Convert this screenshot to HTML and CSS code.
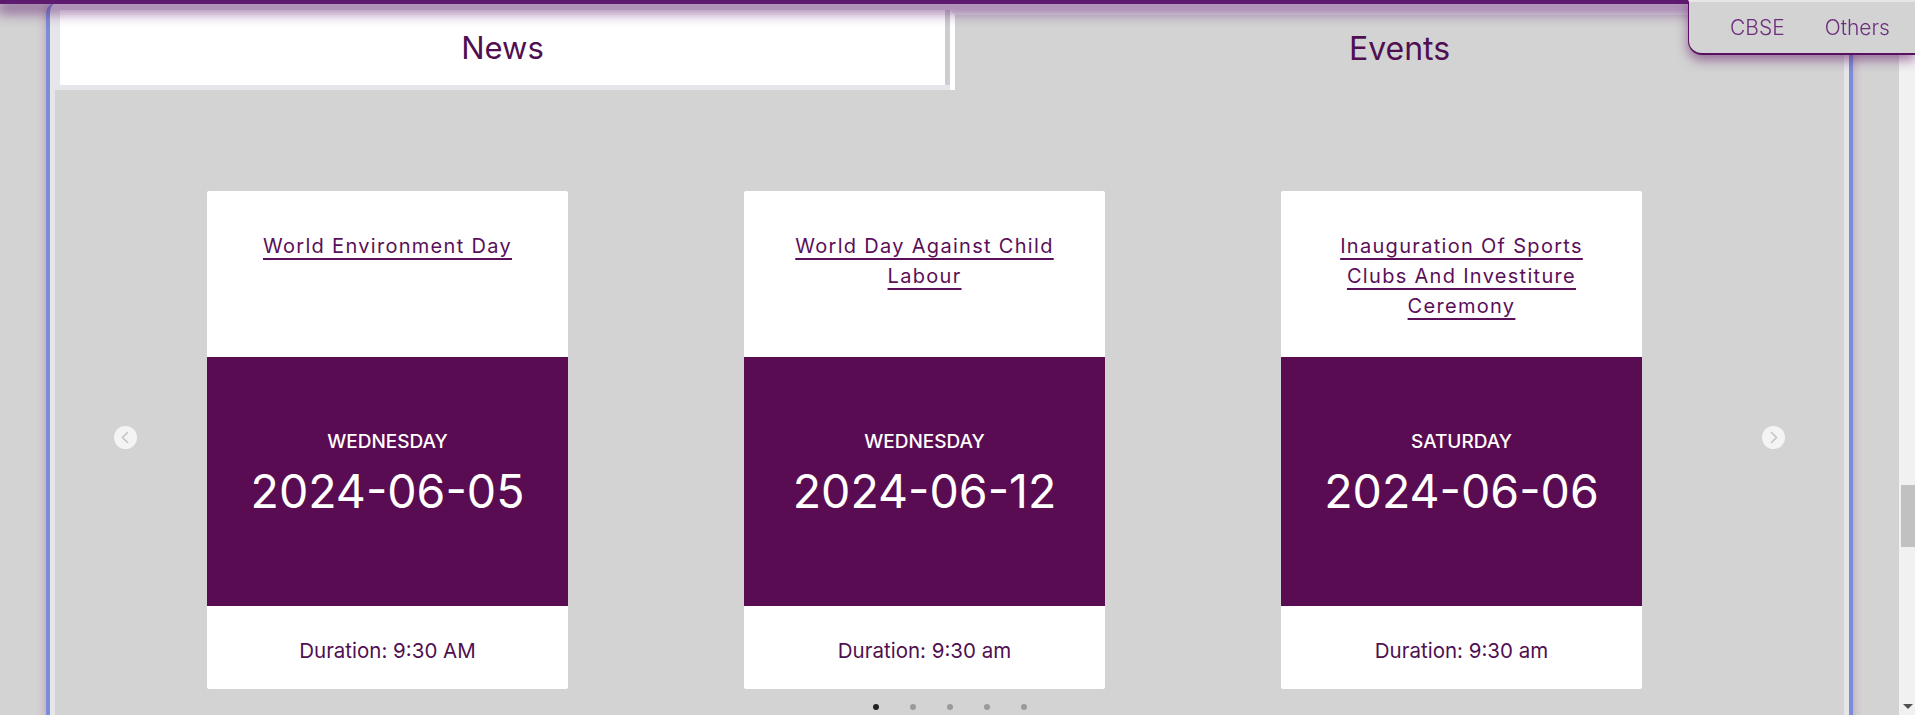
FILE: index.html
```html
<!DOCTYPE html>
<html lang="en">
<head>
<meta charset="utf-8">
<title>News and Events</title>
<link rel="stylesheet" href="styles.css">
</head>
<body>
<div class="topbar"></div>
<nav class="dropdown">
  <a class="dropdown-link">CBSE</a>
  <a class="dropdown-link">Others</a>
</nav>
<div class="page">
  <section class="frame">
    <div class="tabs">
      <div class="tab tab-news">News</div>
      <div class="tab tab-events">Events</div>
    </div>
    <div class="panel">
      <div class="carousel">
        <button class="nav nav-prev" aria-label="Previous">
          <svg width="23" height="23" viewBox="0 0 23 23"><polyline points="13.5,6.5 8.5,11.5 13.5,16.5" fill="none" stroke="#c4c4c4" stroke-width="1.6" stroke-linecap="round" stroke-linejoin="round"/></svg>
        </button>
        <div class="cards">
          <article class="card">
            <div class="card-title"><a class="title-link">World Environment Day</a></div>
            <div class="card-date">
              <div class="day">WEDNESDAY</div>
              <div class="date">2024-06-05</div>
            </div>
            <div class="card-foot">Duration: 9:30 AM</div>
          </article>
          <article class="card">
            <div class="card-title"><a class="title-link">World Day Against Child Labour</a></div>
            <div class="card-date">
              <div class="day">WEDNESDAY</div>
              <div class="date">2024-06-12</div>
            </div>
            <div class="card-foot">Duration: 9:30 am</div>
          </article>
          <article class="card">
            <div class="card-title"><a class="title-link">Inauguration Of Sports Clubs And Investiture Ceremony</a></div>
            <div class="card-date">
              <div class="day">SATURDAY</div>
              <div class="date">2024-06-06</div>
            </div>
            <div class="card-foot">Duration: 9:30 am</div>
          </article>
        </div>
        <button class="nav nav-next" aria-label="Next">
          <svg width="23" height="23" viewBox="0 0 23 23"><polyline points="9.5,6.5 14.5,11.5 9.5,16.5" fill="none" stroke="#c4c4c4" stroke-width="1.6" stroke-linecap="round" stroke-linejoin="round"/></svg>
        </button>
      </div>
      <div class="dots">
        <span class="dot dot-active"></span>
        <span class="dot"></span>
        <span class="dot"></span>
        <span class="dot"></span>
        <span class="dot"></span>
      </div>
    </div>
  </section>
</div>
<div class="scrollbar">
  <div class="scroll-track"><div class="scroll-thumb"></div></div>
  <div class="scroll-arrow"></div>
</div>
</body>
</html>
```
FILE: styles.css
```css
html, body {
  margin: 0;
  padding: 0;
  height: 715px;
  overflow: hidden;
}
body {
  background: #d3d3d3;
  font-family: Inter, "Noto Sans", sans-serif;
  display: flex;
}
.topbar {
  position: fixed;
  top: 0;
  left: 0;
  right: 0;
  height: 4px;
  background: #5e1a6e;
  box-shadow: 0 5px 14px 3px rgba(94, 26, 110, 0.75);
  z-index: 5;
}
.dropdown {
  position: fixed;
  top: 0;
  right: 0;
  width: 227px;
  height: 55px;
  box-sizing: border-box;
  background: #d3d3d3;
  border-top: 2px solid #e6e6e6;
  border-left: 1px solid #5a1060;
  border-bottom: 2px solid #5a1060;
  border-bottom-left-radius: 14px;
  box-shadow: 0 5px 12px rgba(94, 20, 100, 0.55);
  display: flex;
  align-items: center;
  gap: 40px;
  padding: 0 0 0 41px;
  z-index: 6;
}
.dropdown-link {
  color: #6c2d7c;
  font-size: 21px;
  font-weight: 300;
}
.page {
  flex: 1;
  padding: 3px 46px 0;
  min-width: 0;
}
.frame {
  border-left: 4px solid #7b8dd6;
  border-right: 4px solid #7b8dd6;
  border-top-left-radius: 10px;
  border-top-right-radius: 10px;
  background: #e5e5ea;
  padding: 0 5px;
  height: 760px;
  box-shadow: 0 0 10px rgba(130, 50, 120, 0.35);
}
.tabs {
  display: flex;
  padding-top: 7px;
}
.tab {
  color: #4f0f50;
  text-align: center;
}
.tab-news {
  width: 885px;
  height: 75px;
  line-height: 75px;
  font-size: 31px;
  margin-left: 5px;
  margin-bottom: 5px;
  background: #fff;
  border-right: 5px solid #cdcdd2;
}
.tab-events {
  flex: 1;
  height: 75px;
  line-height: 68px;
  font-size: 32px;
  background: #d3d3d3;
  border-top: 5px solid #e5e5ea;
  border-left: 5px solid #fff;
}
.panel {
  background: #d3d3d3;
  height: 670px;
  padding-top: 101px;
  box-sizing: border-box;
}
.carousel {
  position: relative;
}
.cards {
  display: flex;
  gap: 176px;
  padding-left: 152px;
}
.card {
  width: 361px;
  height: 498px;
  background: #fff;
  border-radius: 2px;
  display: flex;
  flex-direction: column;
  overflow: hidden;
}
.card-title {
  flex: none;
  height: 166px;
  box-sizing: border-box;
  padding: 40px 38px 0;
  text-align: center;
  font-size: 20px;
  line-height: 30px;
  letter-spacing: 1.3px;
}
.title-link {
  color: #5a0f58;
  text-decoration: underline;
  text-decoration-thickness: 2px;
  text-underline-offset: 5px;
}
.card-date {
  flex: none;
  height: 249px;
  background: #5a0c53;
  color: #fff;
  text-align: center;
  box-sizing: border-box;
  padding-top: 73px;
}
.day {
  font-size: 19px;
  font-weight: 500;
  line-height: 24px;
}
.date {
  font-size: 46.5px;
  line-height: 56px;
  margin-top: 9px;
}
.card-foot {
  flex: none;
  height: 83px;
  box-sizing: border-box;
  padding-top: 6px;
  display: flex;
  align-items: center;
  justify-content: center;
  color: #4f0f50;
  font-size: 20.5px;
}
.nav {
  position: absolute;
  top: 235px;
  width: 23px;
  height: 23px;
  padding: 0;
  border: 0;
  border-radius: 50%;
  background: #f4f4f4;
  display: flex;
  align-items: center;
  justify-content: center;
}
.nav-prev { left: 59px; }
.nav-next { left: 1707px; }
.dots {
  display: flex;
  justify-content: center;
  gap: 31px;
  margin-top: 15px;
}
.dot {
  width: 6px;
  height: 6px;
  border-radius: 50%;
  background: #9a9a9a;
}
.dot-active { background: #222; }
.scrollbar {
  width: 16px;
  background: #f1f1f1;
  display: flex;
  flex-direction: column;
}
.scroll-track {
  flex: 1;
  padding-top: 485px;
}
.scroll-thumb {
  margin-left: 2px;
  width: 14px;
  height: 62px;
  background: #c1c1c1;
}
.scroll-arrow {
  height: 17px;
  display: flex;
  justify-content: center;
  align-items: center;
}
.scroll-arrow::before {
  content: "";
  border-left: 5px solid transparent;
  border-right: 5px solid transparent;
  border-top: 5px solid #505050;
  margin-left: 1px;
}
```
